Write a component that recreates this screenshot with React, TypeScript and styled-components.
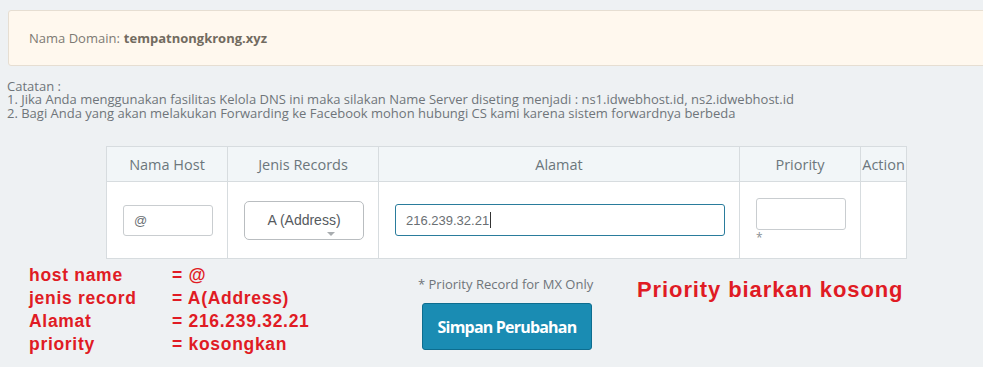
import styled, { createGlobalStyle } from 'styled-components'

const GlobalStyle = createGlobalStyle`
  html, body {
    margin: 0;
    padding: 0;
    background: #eef1f3;
  }
  body {
    font-family: "Open Sans", "Liberation Sans", sans-serif;
  }
`

const Page = styled.div`
  width: 983px;
  height: 367px;
  overflow: hidden;
  padding-top: 10px;
  box-sizing: border-box;
`
const Alert = styled.div`
  margin-left: 8px;
  margin-right: -20px;
  height: 56px;
  box-sizing: border-box;
  background: #fff8ee;
  border: 1px solid #e6ded2;
  border-radius: 3px;
  display: flex;
  align-items: center;
  padding-left: 20px;
  font-size: 13px;
  color: #7d7a73;
`
const Domain = styled.b`
  font-weight: 700;
  color: #726b5f;
  margin-left: 4px;
`
const Notes = styled.div`
  margin: 14px 0 0 7px;
  font-size: 13px;
  line-height: 13.4px;
  color: #6f757a;
`
const Table = styled.table`
  margin: 26px 0 0 106px;
  border-collapse: collapse;
  table-layout: fixed;
  width: 801px;
  background: #fff;
`
const Th = styled.th<{ $w: number }>`
  width: ${p => p.$w}px;
  height: 34px;
  padding: 0;
  background: #f2f6f8;
  border: 1px solid #d7dcdf;
  font-weight: 400;
  font-size: 14.5px;
  color: #6c767c;
  text-align: center;
  white-space: nowrap;
  overflow: visible;
`
const Td = styled.td`
  height: 76px;
  padding: 0 0 0 16px;
  border: 1px solid #d7dcdf;
  vertical-align: middle;
`
const TextBox = styled.div<{ $w: number; $h?: number; $active?: boolean }>`
  width: ${p => p.$w}px;
  height: ${p => p.$h ?? 31}px;
  box-sizing: border-box;
  border: 1px solid ${p => (p.$active ? '#2a7c9c' : '#c9cdd0')};
  border-radius: 3px;
  background: #fff;
  display: flex;
  align-items: center;
  padding-left: 10px;
  font-family: "Liberation Sans", Arial, sans-serif;
  font-size: 13px;
  color: #6a6f73;
`
const Caret = styled.span`
  display: inline-block;
  width: 1px;
  height: 16px;
  background: #333;
  margin-left: 1px;
`
const Select = styled.div`
  position: relative;
  width: 120px;
  height: 39px;
  box-sizing: border-box;
  border: 1px solid #b9bdc0;
  border-radius: 5px;
  display: flex;
  align-items: center;
  justify-content: center;
  font-family: "Liberation Sans", Arial, sans-serif;
  font-size: 14px;
  color: #555a5e;
  &::after {
    content: '';
    position: absolute;
    left: 82px;
    bottom: 3px;
    border-left: 4px solid transparent;
    border-right: 4px solid transparent;
    border-top: 4px solid #a9adb0;
  }
`
const Star = styled.div`
  font-size: 12px;
  line-height: 10px;
  height: 10px;
  margin-top: 3px;
  color: #8a9094;
`
const Bottom = styled.div`
  display: flex;
  margin-top: 5px;
  padding-left: 29px;
`
const Annotations = styled.div`
  width: 389px;
  display: grid;
  grid-template-columns: 143px 1fr;
  font-family: "Liberation Sans", Arial, sans-serif;
  font-weight: 700;
  font-size: 17.5px;
  letter-spacing: 0.7px;
  line-height: 23px;
  color: #e01b24;
`
const Middle = styled.div`
  width: 219px;
  padding-top: 11px;
`
const Hint = styled.div`
  font-size: 13px;
  line-height: 18px;
  color: #6f757a;
`
const SaveButton = styled.button`
  margin: 10px 0 0 4px;
  width: 170px;
  height: 47px;
  background: #1a8cb3;
  border: 1px solid #0d6d8f;
  border-radius: 3px;
  color: #fff;
  font-family: "Open Sans", sans-serif;
  font-weight: 700;
  font-size: 16px;
  letter-spacing: -0.8px;
  padding: 0;
`
const Warning = styled.div`
  margin-top: 13px;
  font-family: "Liberation Sans", Arial, sans-serif;
  font-weight: 700;
  font-size: 22px;
  letter-spacing: 0.9px;
  line-height: 26px;
  color: #e01b24;
`

const rows: [string, string][] = [
  ['host name', '= @'],
  ['jenis record', '= A(Address)'],
  ['Alamat', '= 216.239.32.21'],
  ['priority', '= kosongkan'],
]

export default function App () {
  return (
    <Page>
      <GlobalStyle />
      <Alert>
        Nama Domain:<Domain>tempatnongkrong.xyz</Domain>
      </Alert>
      <Notes>
        Catatan :<br />
        1. Jika Anda menggunakan fasilitas Kelola DNS ini maka silakan Name Server diseting menjadi : ns1.idwebhost.id, ns2.idwebhost.id<br />
        2. Bagi Anda yang akan melakukan Forwarding ke Facebook mohon hubungi CS kami karena sistem forwardnya berbeda
      </Notes>
      <Table>
        <thead>
          <tr>
            <Th $w={120}>Nama Host</Th>
            <Th $w={150}>Jenis Records</Th>
            <Th $w={360}>Alamat</Th>
            <Th $w={120}>Priority</Th>
            <Th $w={45}>Action</Th>
          </tr>
        </thead>
        <tbody>
          <tr>
            <Td><TextBox $w={90}>@</TextBox></Td>
            <Td><Select>A (Address)</Select></Td>
            <Td>
              <TextBox $w={330} $h={32} $active>216.239.32.21<Caret /></TextBox>
            </Td>
            <Td>
              <TextBox $w={90} $h={32} />
              <Star>*</Star>
            </Td>
            <Td />
          </tr>
        </tbody>
      </Table>
      <Bottom>
        <Annotations>
          {rows.map(([k, v]) => (
            <>
              <span key={k}>{k}</span>
              <span key={k + 'v'}>{v}</span>
            </>
          ))}
        </Annotations>
        <Middle>
          <Hint>* Priority Record for MX Only</Hint>
          <SaveButton>Simpan Perubahan</SaveButton>
        </Middle>
        <Warning>Priority biarkan kosong</Warning>
      </Bottom>
    </Page>
  )
}
